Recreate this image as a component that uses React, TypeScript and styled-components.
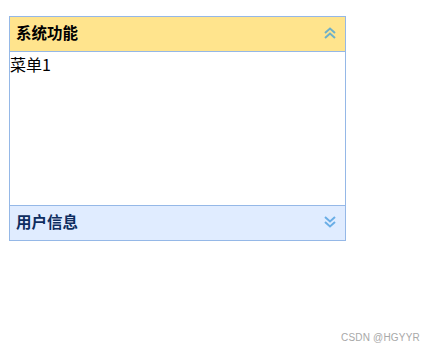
import React from "react";
import styled, { createGlobalStyle } from "styled-components";

const Global = createGlobalStyle`
  html, body { margin: 0; padding: 0; background: #fff; }
  body { font-family: "Noto Sans CJK SC", "Liberation Sans", sans-serif; }
`;

const Page = styled.div`
  position: relative;
  width: 432px;
  height: 351px;
  padding: 16px 0 0 9px;
  box-sizing: border-box;
`;

const Accordion = styled.div`
  width: 337px;
  box-sizing: border-box;
  border: 1px solid #95b8e7;
  display: flex;
  flex-direction: column;
`;

const Header = styled.div<{ $selected?: boolean }>`
  height: 35px;
  box-sizing: border-box;
  display: flex;
  align-items: center;
  justify-content: space-between;
  padding: 0 8px 2px 6px;
  background: ${(p) => (p.$selected ? "#ffe48d" : "#e0ecff")};
  border-top: ${(p) => (p.$selected ? "none" : "1px solid #95b8e7")};
  border-bottom: ${(p) => (p.$selected ? "1px solid #95b8e7" : "none")};
`;

const Title = styled.span<{ $selected?: boolean }>`
  font-family: "Noto Sans CJK SC", sans-serif;
  font-weight: bold;
  font-size: 15.5px;
  color: ${(p) => (p.$selected ? "#000" : "#0e2d5f")};
  line-height: 1;
`;

const Body = styled.div`
  height: 153px;
  background: #fff;
  font-family: "Noto Sans CJK SC", sans-serif;
  font-size: 16px;
  line-height: 24px;
  color: #000;
`;

const Watermark = styled.div`
  position: absolute;
  right: 12px;
  bottom: 8px;
  font-family: "Liberation Sans", sans-serif;
  font-size: 10px;
  letter-spacing: 0.2px;
  color: #a8a8a8;
`;

const Chevrons = ({ up }: { up?: boolean }) => (
  <svg width="14" height="14" viewBox="0 0 14 14">
    <g
      fill="none"
      stroke={up ? "#6fb0c8" : "#6aaee6"}
      strokeWidth="2"
      transform={up ? undefined : "rotate(180 7 7)"}
    >
      <polyline points="2,7 7,2.5 12,7" />
      <polyline points="2,12 7,7.5 12,12" />
    </g>
  </svg>
);

export default function App() {
  return (
    <>
      <Global />
      <Page>
        <Accordion>
          <Header $selected>
            <Title $selected>系统功能</Title>
            <Chevrons up />
          </Header>
          <Body>菜单1</Body>
          <Header>
            <Title>用户信息</Title>
            <Chevrons />
          </Header>
        </Accordion>
        <Watermark>CSDN @HGYYR</Watermark>
      </Page>
    </>
  );
}
